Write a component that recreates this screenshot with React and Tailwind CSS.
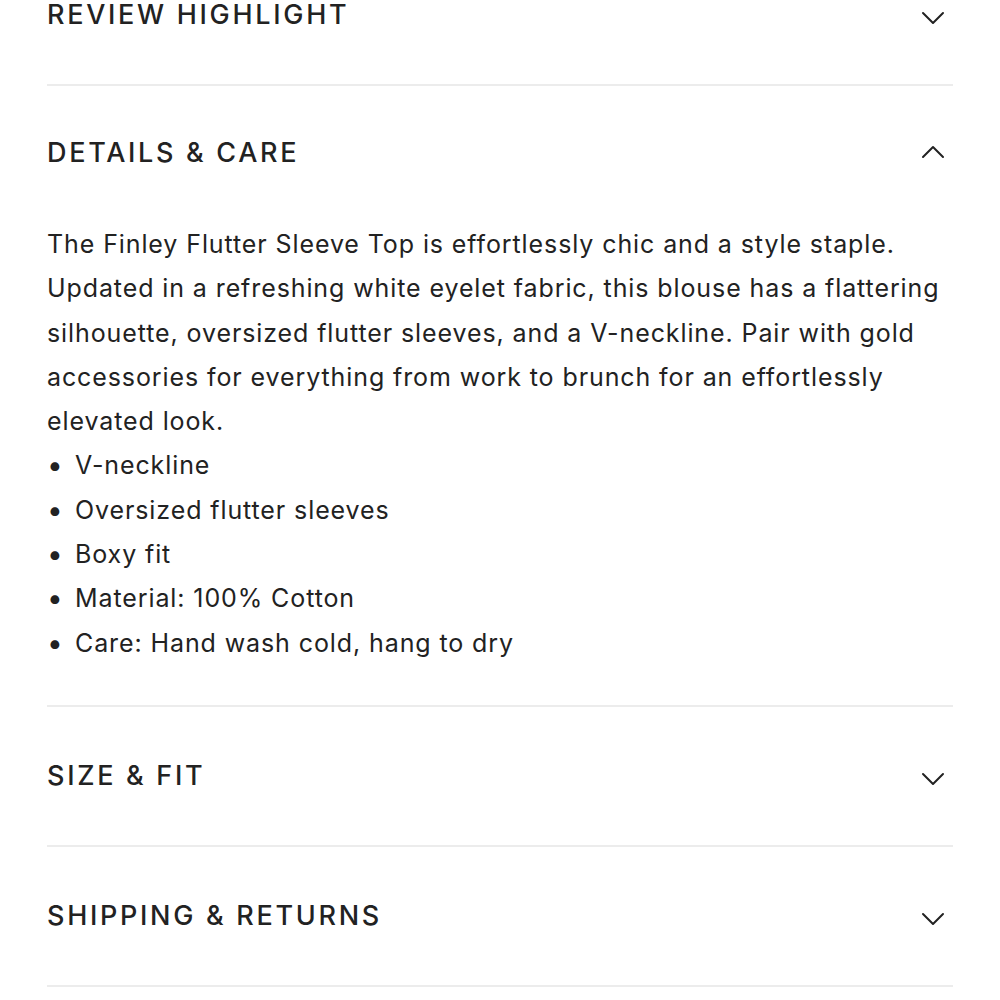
import { useState } from "react";

function Chevron({ up }) {
  return (
    <svg width="24" height="14" viewBox="0 0 24 14" fill="none" className="shrink-0">
      <polyline
        points={up ? "2,12 12,2 22,12" : "2,2 12,12 22,2"}
        stroke="#222222"
        strokeWidth="2"
        strokeLinecap="round"
        strokeLinejoin="round"
      />
    </svg>
  );
}

const bullets = [
  "V-neckline",
  "Oversized flutter sleeves",
  "Boxy fit",
  "Material: 100% Cotton",
  "Care: Hand wash cold, hang to dry",
];

function Section({ title, open, onToggle, children, first }) {
  return (
    <div className={`border-b-2 border-[#ececec] ${first ? "-mt-[54px]" : ""}`}>
      <button
        type="button"
        onClick={onToggle}
        className={`w-full flex items-center justify-between pr-[8px] text-left ${
          open ? "h-[134px]" : "h-[138px]"
        }`}
      >
        <span className="text-[27px] font-medium tracking-[0.1em] text-[#222222]">{title}</span>
        <span className={open ? "-mt-[2px]" : "mt-[6px]"}>
          <Chevron up={open} />
        </span>
      </button>
      {open && children}
    </div>
  );
}

export default function App() {
  const [open, setOpen] = useState("details");
  const toggle = (k) => setOpen(open === k ? "" : k);

  return (
    <div className="w-[1000px] h-[1000px] overflow-hidden bg-white px-[47px] font-['Inter',sans-serif] text-[#222222]">
      <Section first title="REVIEW HIGHLIGHT" open={open === "review"} onToggle={() => toggle("review")}>
        <div className="pb-10 text-[25px] leading-[44px]">No reviews yet.</div>
      </Section>

      <Section title="DETAILS & CARE" open={open === "details"} onToggle={() => toggle("details")}>
        <div className="pt-[2px] pb-[40px] text-[25px] leading-[44.3px] tracking-[0.036em]">
          <p>
            The Finley Flutter Sleeve Top is effortlessly chic and a style staple. Updated in a
            refreshing white eyelet fabric, this blouse has a flattering silhouette, oversized
            flutter sleeves, and a V-neckline. Pair with gold accessories for everything from work
            to brunch for an effortlessly elevated look.
          </p>
          <ul>
            {bullets.map((b) => (
              <li key={b} className="flex">
                <span className="w-[28px] shrink-0 text-[28px] leading-[44.3px]">•</span>
                <span>{b}</span>
              </li>
            ))}
          </ul>
        </div>
      </Section>

      <Section title="SIZE & FIT" open={open === "size"} onToggle={() => toggle("size")}>
        <div className="pb-10 text-[25px] leading-[44px]">Fits true to size.</div>
      </Section>

      <Section title="SHIPPING & RETURNS" open={open === "ship"} onToggle={() => toggle("ship")}>
        <div className="pb-10 text-[25px] leading-[44px]">Free shipping on orders over $100.</div>
      </Section>
    </div>
  );
}
